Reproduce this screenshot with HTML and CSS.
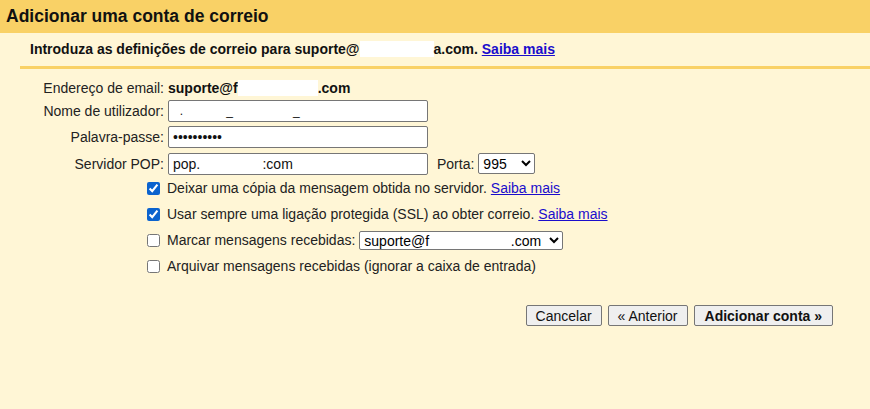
FILE: index.html
```html
<!DOCTYPE html>
<html lang="pt">

<head>
    <meta charset="UTF-8">
    <title>Adicionar uma conta de correio</title>
    <link rel="stylesheet" href="styles.css">
</head>

<body>
    <div class="header">Adicionar uma conta de correio</div>

    <div class="intro">
        Introduza as definições de correio para suporte@<span class="hidden hidden-intro"></span>a.com.
        <a href="#">Saiba mais</a>
    </div>

    <div class="form">
        <div class="row row-email">
            <span class="label">Endereço de email:</span>
            <span class="value">suporte@f<span class="hidden hidden-email"></span>.com</span>
        </div>
        <div class="row">
            <label class="label" for="user">Nome de utilizador:</label>
            <input id="user" class="field field-user" type="text" value="  .             _                  _">
        </div>
        <div class="row">
            <label class="label" for="pass">Palavra-passe:</label>
            <input id="pass" class="field" type="password" value="contasenha">
        </div>
        <div class="row row-pop">
            <label class="label" for="pop">Servidor POP:</label>
            <input id="pop" class="field" type="text" value="pop.                :com">
            <label class="port-label" for="port">Porta:</label>
            <select id="port" class="port">
                <option>995</option>
                <option>110</option>
            </select>
        </div>

        <div class="options">
            <label class="option">
                <input type="checkbox" checked>
                Deixar uma cópia da mensagem obtida no servidor. <a href="#">Saiba mais</a>
            </label>
            <label class="option">
                <input type="checkbox" checked>
                Usar sempre uma ligação protegida (SSL) ao obter correio. <a href="#">Saiba mais</a>
            </label>
            <label class="option">
                <input type="checkbox">
                Marcar mensagens recebidas:
                <select class="tag">
                    <option>suporte@f&nbsp;&nbsp;&nbsp;&nbsp;&nbsp;&nbsp;&nbsp;&nbsp;&nbsp;&nbsp;&nbsp;&nbsp;&nbsp;&nbsp;&nbsp;&nbsp;&nbsp;&nbsp;&nbsp;&nbsp;&nbsp;.com</option>
                </select>
            </label>
            <label class="option">
                <input type="checkbox">
                Arquivar mensagens recebidas (ignorar a caixa de entrada)
            </label>
        </div>
    </div>

    <div class="actions">
        <button>Cancelar</button>
        <button>« Anterior</button>
        <button class="primary">Adicionar conta »</button>
    </div>
</body>

</html>
```

FILE: styles.css
```css
body {
    margin: 0px;
    padding: 0px;
    background-color: #fff6d6;
    font-family: "Liberation Sans", Arial, sans-serif;
    font-size: 14px;
    color: #222;
    height: 100vh;
}

a {
    color: #1a0dcc;
}

.header {
    background-color: #f9d166;
    height: 33px;
    line-height: 33px;
    padding-left: 6px;
    font-size: 17.5px;
    font-weight: bold;
    color: #111;
}

.intro {
    margin-left: 20px;
    padding: 8px 0px 0px 10px;
    height: 25px;
    border-bottom: 3px solid #f9d166;
    font-weight: bold;
    color: #111;
}

.intro a {
    font-weight: bold;
    color: #1a0dcc;
}

/* white boxes over the hidden parts of the address */
.hidden {
    display: inline-block;
    background-color: white;
    vertical-align: -3px;
    height: 16px;
}

.hidden-intro {
    width: 74px;
}

.hidden-email {
    width: 80px;
}

.form {
    padding-top: 8px;
}

.row {
    display: flex;
    align-items: center;
    height: 26px;
}

.row-email {
    height: 21px;
}

.row-pop {
    height: 27px;
}

.label {
    width: 168px;
    text-align: right;
    padding-right: 4px;
    box-sizing: border-box;
    flex-shrink: 0;
}

.value {
    font-weight: bold;
    color: #111;
}

.field {
    width: 260px;
    height: 22px;
    box-sizing: border-box;
    border: 1px solid #767676;
    border-radius: 2px;
    background: white;
    font-family: "Liberation Sans", Arial, sans-serif;
    font-size: 14px;
    color: #111;
    padding: 1px 4px;
    margin: 0px;
}

.field-user {
    font-size: 12px;
}

.port-label {
    margin: 0px 4px 0px 9px;
}

.port {
    width: 57px;
    height: 21px;
    font-family: "Liberation Sans", Arial, sans-serif;
    font-size: 14px;
    border: 1px solid #767676;
    border-radius: 2px;
    background: white;
}

.options {
    margin-top: -2px;
    padding-left: 144px;
}

.option {
    display: flex;
    align-items: center;
    height: 26px;
}

.option input {
    width: 13px;
    height: 13px;
    margin: 0px 7px 0px 3px;
    accent-color: #0b63ce;
}

.option a {
    margin-left: 4px;
}

.tag {
    margin-left: 4px;
    width: 204px;
    height: 19px;
    font-family: "Liberation Sans", Arial, sans-serif;
    font-size: 14px;
    border: 1px solid #767676;
    border-radius: 2px;
    background: white;
}

.actions {
    display: flex;
    justify-content: flex-end;
    gap: 6px;
    padding: 26px 37px 0px 0px;
}

.actions button {
    height: 21px;
    font-family: "Liberation Sans", Arial, sans-serif;
    font-size: 14px;
    color: #111;
    padding: 0px 9px;
    background-color: #efefef;
    border: 1px solid #767676;
    border-radius: 2px;
}

.actions .primary {
    font-weight: bold;
    padding: 0px 10px;
}
```
